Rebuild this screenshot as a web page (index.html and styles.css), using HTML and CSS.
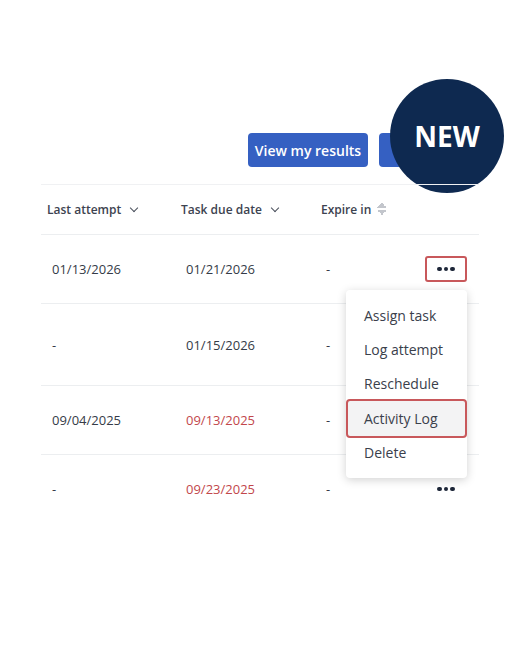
FILE: index.html
```html
<!DOCTYPE html>
<html lang="en">
<head>
    <meta charset="UTF-8">
    <meta name="viewport" content="width=device-width, initial-scale=1.0">
    <title>Tasks</title>
    <link rel="stylesheet" href="styles.css">
</head>
<body>

    <div class="page">
        <!-- Toolbar with the two action buttons -->
        <div class="toolbar">
            <button class="btn">View my results</button>
            <button class="btn btn-wide" aria-label="Assign tasks"></button>
            <div class="badge">NEW</div>
        </div>

        <div class="table">
            <div class="row head">
                <div class="cell">Last attempt <span class="chev"></span></div>
                <div class="cell">Task due date <span class="chev"></span></div>
                <div class="cell">Expire in <span class="sort"></span></div>
                <div class="cell"></div>
            </div>
            <div class="row">
                <div class="cell">01/13/2026</div>
                <div class="cell">01/21/2026</div>
                <div class="cell">-</div>
                <div class="cell act"><span class="dots active"><i></i><i></i><i></i></span></div>
            </div>
            <div class="row tall">
                <div class="cell">-</div>
                <div class="cell">01/15/2026</div>
                <div class="cell">-</div>
                <div class="cell act"></div>
            </div>
            <div class="row">
                <div class="cell">09/04/2025</div>
                <div class="cell late">09/13/2025</div>
                <div class="cell">-</div>
                <div class="cell act"></div>
            </div>
            <div class="row last">
                <div class="cell">-</div>
                <div class="cell late">09/23/2025</div>
                <div class="cell">-</div>
                <div class="cell act"><span class="dots"><i></i><i></i><i></i></span></div>
            </div>

            <!-- Row menu, opened from the first row -->
            <div class="menu">
                <div class="menu-item">Assign task</div>
                <div class="menu-item">Log attempt</div>
                <div class="menu-item">Reschedule</div>
                <div class="menu-item picked">Activity Log</div>
                <div class="menu-item">Delete</div>
            </div>
        </div>
    </div>

</body>
</html>
```

FILE: styles.css
```css
body {
    margin: 0;
    background: #ffffff;
    font-family: "Open Sans", "Noto Sans", sans-serif;
    color: #353b47;
}
.page {
    width: 520px;
    height: 648px;
    padding-top: 133px;
    box-sizing: border-box;
}
.toolbar {
    position: relative;
    display: flex;
    justify-content: flex-end;
    gap: 11px;
    width: 438px;
    margin-left: 41px;
    height: 34px;
}
.btn {
    background-color: #3560c2;
    color: white;
    border: none;
    border-radius: 4px;
    height: 34px;
    width: 120px;
    padding: 0;
    font-family: inherit;
    font-size: 14px;
    font-weight: 600;
}
.btn-wide {
    width: 100px;
}
.badge {
    position: absolute;
    left: 349px;
    top: -54px;
    width: 114px;
    height: 114px;
    border-radius: 50%;
    background-color: #0e2950;
    color: white;
    font-size: 28px;
    font-weight: 700;
    display: flex;
    align-items: center;
    justify-content: center;
}
.table {
    position: relative;
    width: 438px;
    margin-left: 41px;
    margin-top: 17px;
    border-top: 1px solid #f0f1f3;
}
.row {
    display: grid;
    grid-template-columns: 134px 140px 85px 79px;
    align-items: center;
    height: 68px;
    border-bottom: 1px solid #eceef0;
    font-size: 13px;
}
.row.tall {
    height: 81px;
}
.row.last {
    border-bottom: none;
}
.row.head {
    height: 49px;
    font-size: 12px;
    font-weight: 600;
    color: #3d4350;
}
.cell {
    padding-left: 11px;
}
.head .cell {
    padding-left: 6px;
}
.late {
    color: #c2474b;
}
.chev {
    display: inline-block;
    width: 5px;
    height: 5px;
    border-right: 1.5px solid #4a505c;
    border-bottom: 1.5px solid #4a505c;
    transform: rotate(45deg);
    margin-left: 7px;
    position: relative;
    top: -3px;
}
.sort {
    display: inline-block;
    width: 10px;
    height: 12px;
    margin-left: 3px;
    vertical-align: -1px;
    background:
        linear-gradient(to bottom right, transparent 50%, #c3c6cc 50%) 0 0 / 5px 5px no-repeat,
        linear-gradient(to bottom left, transparent 50%, #c3c6cc 50%) 5px 0 / 5px 5px no-repeat,
        linear-gradient(to top right, transparent 50%, #c3c6cc 50%) 0 7px / 5px 5px no-repeat,
        linear-gradient(to top left, transparent 50%, #c3c6cc 50%) 5px 7px / 5px 5px no-repeat;
}
.act {
    display: flex;
    justify-content: flex-end;
    padding-right: 12px;
}
.dots {
    display: flex;
    align-items: center;
    justify-content: center;
    gap: 2px;
    width: 38px;
    height: 22px;
    border: 2px solid transparent;
    border-radius: 3px;
}
.dots i {
    width: 4.5px;
    height: 4.5px;
    border-radius: 50%;
    background-color: #1d2638;
}
.dots.active {
    border-color: #c8585b;
}
.menu {
    position: absolute;
    left: 305px;
    top: 105px;
    width: 121px;
    padding: 9px 0 8px;
    background: white;
    border-radius: 4px;
    box-shadow: 0 2px 10px rgba(0, 0, 0, 0.18);
    font-size: 14px;
    color: #3a404b;
}
.menu-item {
    height: 34px;
    line-height: 34px;
    padding-left: 18px;
}
.menu-item.picked {
    height: 35px;
    line-height: 35px;
    margin: -2px 0;
    padding-left: 16px;
    border: 2px solid #c8585b;
    border-radius: 4px;
    background-color: #f3f3f4;
}
```
